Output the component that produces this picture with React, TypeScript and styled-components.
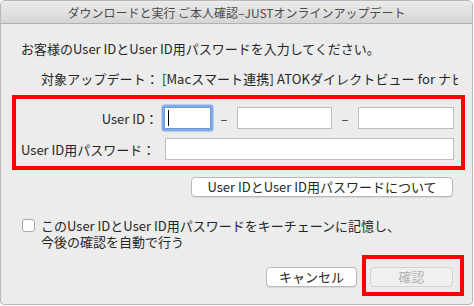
import styled, { createGlobalStyle } from 'styled-components';

const GlobalStyle = createGlobalStyle`
  html, body {
    margin: 0;
    padding: 0;
    background: #ffffff;
  }
  body {
    font-family: 'Noto Sans CJK JP', 'Noto Sans', sans-serif;
    font-size: 13px;
    color: #262626;
  }
`;

const Window = styled.div`
  width: 471px;
  height: 303px;
  border: 1px solid #b8b8b8;
  border-radius: 5px 5px 4px 4px;
  background: #ececec;
  display: flex;
  flex-direction: column;
  overflow: hidden;
`;

const TitleBar = styled.div`
  height: 22px;
  flex: none;
  border-bottom: 1px solid #b1b1b1;
  background: linear-gradient(#ebebeb, #d5d5d5);
  display: flex;
  align-items: center;
  justify-content: center;
  font-size: 12px;
  color: #4b4b4b;
`;

const Content = styled.div`
  display: flex;
  flex-direction: column;
`;

const Line = styled.div<{ $top: number; $left: number }>`
  margin-top: ${(p) => p.$top}px;
  margin-left: ${(p) => p.$left}px;
  line-height: 18px;
  white-space: nowrap;
`;

const Target = styled(Line)`
  width: 417px;
  overflow: hidden;
  letter-spacing: 0.1px;
`;

const Highlight = styled.div`
  border: 4px solid #ff0000;
  box-sizing: border-box;
`;

const CredentialsBox = styled(Highlight)`
  margin: 7px 0 0 11px;
  width: 453px;
  height: 75px;
  padding: 8px 7px 0 0;
  display: flex;
  flex-direction: column;
  gap: 9px;
`;

const Row = styled.div`
  display: flex;
  align-items: center;
  height: 22px;
`;

const Label = styled.div<{ $right?: boolean }>`
  width: ${(p) => (p.$right ? 142 : 143)}px;
  padding-left: ${(p) => (p.$right ? 0 : 5)}px;
  box-sizing: border-box;
  text-align: ${(p) => (p.$right ? 'right' : 'left')};
  margin-right: 6px;
  white-space: nowrap;
`;

const Field = styled.div<{ $w: number; $focus?: boolean }>`
  width: ${(p) => p.$w}px;
  height: 22px;
  box-sizing: border-box;
  background: #ffffff;
  border: 1px solid ${(p) => (p.$focus ? '#6f98d6' : '#bdbdbd')};
  box-shadow: ${(p) => (p.$focus ? '0 0 0 2.5px #83aaea' : 'none')};
  border-radius: ${(p) => (p.$focus ? '1px' : '0')};
  display: flex;
  align-items: center;
  padding-left: 3px;
`;

const Caret = styled.div`
  width: 1px;
  height: 16px;
  background: #000;
`;

const Dash = styled.div`
  width: 26px;
  text-align: center;
  color: #333;
`;

const PushButton = styled.div<{ $disabled?: boolean }>`
  height: 20px;
  box-sizing: border-box;
  border: 1px solid ${(p) => (p.$disabled ? '#d2d2d2' : '#b9b9b9')};
  border-radius: 4px;
  background: ${(p) => (p.$disabled ? '#f0f0f0' : '#ffffff')};
  color: ${(p) => (p.$disabled ? '#b3b3b3' : '#262626')};
  box-shadow: ${(p) => (p.$disabled ? 'none' : '0 1px 0 rgba(0,0,0,0.08)')};
  display: flex;
  align-items: center;
  justify-content: center;
  line-height: 18px;
  white-space: nowrap;
`;

const AboutButton = styled(PushButton)`
  margin: 7px 0 0 190px;
  width: 262px;
`;

const CheckRow = styled.div`
  margin: 21px 0 0 21px;
  display: flex;
  align-items: flex-start;
  gap: 6px;
`;

const CheckBox = styled.div`
  width: 13px;
  height: 13px;
  box-sizing: border-box;
  margin-top: 1px;
  border: 1px solid #a9a9a9;
  border-radius: 3px;
  background: #ffffff;
  flex: none;
`;

const CheckText = styled.div`
  display: flex;
  flex-direction: column;
  line-height: 16px;
`;

const Footer = styled.div`
  margin: 5px 0 0 265px;
  display: flex;
  align-items: flex-start;
  gap: 5px;
`;

const CancelButton = styled(PushButton)`
  margin-top: 12px;
  width: 91px;
`;

const ConfirmBox = styled(Highlight)`
  width: 102px;
  height: 41px;
  padding: 8px 7px 0 4px;
`;

export default function App() {
  return (
    <>
      <GlobalStyle />
      <Window>
        <TitleBar>ダウンロードと実行 ご本人確認–JUSTオンラインアップデート</TitleBar>
        <Content>
          <Line $top={16} $left={20}>
            お客様のUser IDとUser ID用パスワードを入力してください。
          </Line>
          <Target $top={12} $left={40}>
            対象アップデート： [Macスマート連携] ATOKダイレクトビュー for ナビゲーション
          </Target>
          <CredentialsBox>
            <Row>
              <Label $right>User ID：</Label>
              <Field $w={47} $focus>
                <Caret />
              </Field>
              <Dash>–</Dash>
              <Field $w={95} />
              <Dash>–</Dash>
              <Field $w={96} />
            </Row>
            <Row>
              <Label>User ID用パスワード：</Label>
              <Field $w={290} />
            </Row>
          </CredentialsBox>
          <AboutButton>User IDとUser ID用パスワードについて</AboutButton>
          <CheckRow>
            <CheckBox />
            <CheckText>
              <span>このUser IDとUser ID用パスワードをキーチェーンに記憶し、</span>
              <span>今後の確認を自動で行う</span>
            </CheckText>
          </CheckRow>
          <Footer>
            <CancelButton>キャンセル</CancelButton>
            <ConfirmBox>
              <PushButton $disabled>確認</PushButton>
            </ConfirmBox>
          </Footer>
        </Content>
      </Window>
    </>
  );
}
